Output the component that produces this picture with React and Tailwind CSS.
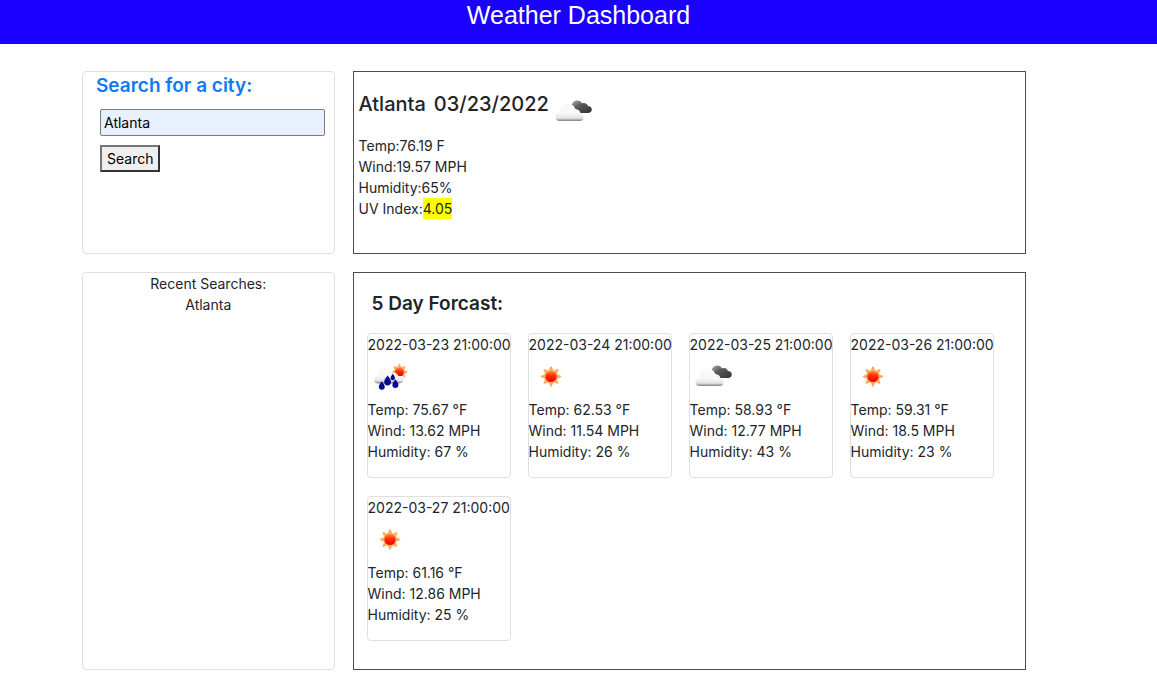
import { useState } from "react";

const days = [
  { date: "2022-03-23 21:00:00", icon: "rain", temp: "75.67", wind: "13.62", humidity: "67" },
  { date: "2022-03-24 21:00:00", icon: "sun", temp: "62.53", wind: "11.54", humidity: "26" },
  { date: "2022-03-25 21:00:00", icon: "clouds", temp: "58.93", wind: "12.77", humidity: "43" },
  { date: "2022-03-26 21:00:00", icon: "sun", temp: "59.31", wind: "18.5", humidity: "23" },
  { date: "2022-03-27 21:00:00", icon: "sun", temp: "61.16", wind: "12.86", humidity: "25" },
];

const rays = [0, 45, 90, 135, 180, 225, 270, 315];

function SunShape() {
  return (
    <g>
      {rays.map((angle) => (
        <path key={angle} d="M-2.3 -6 L-0.5 -10.2 L0.5 -10.2 L2.3 -6 Z" fill="#f9ae5c" transform={`rotate(${angle})`} />
      ))}
      <circle r="6.8" fill="#fbb058" />
      <circle r="5.6" fill="url(#sun-core)" />
    </g>
  );
}

function Gradients() {
  return (
    <svg className="absolute size-0" aria-hidden="true">
      <defs>
        <linearGradient id="sun-core" x1="0" y1="0" x2="0" y2="1">
          <stop offset="0" stopColor="#ff8a3c" />
          <stop offset="0.45" stopColor="#ff2a0c" />
          <stop offset="1" stopColor="#f50000" />
        </linearGradient>
        <linearGradient id="cloud-light" x1="0" y1="0" x2="0" y2="1">
          <stop offset="0" stopColor="#fafafa" />
          <stop offset="0.6" stopColor="#f6f6f6" />
          <stop offset="0.84" stopColor="#e2e2e2" />
          <stop offset="1" stopColor="#808080" />
        </linearGradient>
        <linearGradient id="cloud-dark" x1="0" y1="0" x2="1" y2="1">
          <stop offset="0" stopColor="#b0b0b0" />
          <stop offset="0.4" stopColor="#5a5a5a" />
          <stop offset="1" stopColor="#303030" />
        </linearGradient>
      </defs>
    </svg>
  );
}

function WeatherIcon({ name }) {
  if (name === "sun") {
    return (
      <svg viewBox="0 0 44 44" className="size-11" role="img" aria-label="Clear">
        <g transform="translate(22 21.5)">
          <SunShape />
        </g>
      </svg>
    );
  }
  if (name === "clouds") {
    return (
      <svg viewBox="0 0 44 44" className="size-11" role="img" aria-label="Cloudy">
        <path
          d="M21.5 16.5 C21.5 13 24 10.4 27.2 10.4 C29.6 10.4 31.2 11.6 32 13.4 C34.6 12.4 37.2 13.6 37.9 16 C40.4 16.2 41.8 17.6 41.8 19.6 C41.8 21.8 40.2 23 38 23 L31.5 23 C29 23 27.8 21.4 26.6 19.4 Z"
          fill="url(#cloud-dark)"
        />
        <path
          d="M9.5 31 C7 31 5.4 29.2 5.4 26.8 C5.4 24.2 7 22.6 9.6 22.4 C9.6 17 12.6 13.6 17.4 13.6 C21.6 13.6 24.4 16 25.4 19.6 C28.2 19 30 20.4 30.2 23 C32.4 23.4 33.6 25 33.6 27 C33.6 29.4 32.2 31 30 31 Z"
          fill="url(#cloud-light)"
        />
      </svg>
    );
  }
  return (
    <svg viewBox="0 0 44 44" className="size-11" role="img" aria-label="Rain">
      <g transform="translate(31.4 17) scale(0.8)">
        <SunShape />
      </g>
      <path
        d="M9.5 28.4 C7.3 28.4 6 27 6 24.8 C6 22.4 7.4 21 10 20.8 C9.8 15.6 13 12.2 17.4 12.2 C21.4 12.2 24 14.6 24.8 18 C27.4 17.2 29.4 18.4 30 20.8 C31.6 21.2 34 20.8 36 21.2 C36.6 25.4 34.4 28.4 30.4 28.4 Z"
        fill="url(#cloud-light)"
      />
      <g fill="#0a0a91">
        <path d="M13.8 26.4 C15.4 28.2 16.8 30 16.8 31.8 A3 3 0 0 1 10.8 31.8 C10.8 30 12.2 28.2 13.8 26.4 Z" />
        <path d="M19.6 20.6 C21.4 23 23 24.8 23 27 A3.4 3.4 0 0 1 16.2 27 C16.2 24.8 17.8 23 19.6 20.6 Z" />
        <path d="M24.8 18.8 C26 20.4 27 21.6 27 23 A2.2 2.2 0 0 1 22.6 23 C22.6 21.6 23.6 20.4 24.8 18.8 Z" />
        <path d="M27.4 24.6 C29 26.4 30.4 28.2 30.4 30 A3 3 0 0 1 24.4 30 C24.4 28.2 25.8 26.4 27.4 24.6 Z" />
      </g>
    </svg>
  );
}

function DayCard({ day }) {
  return (
    <li className="w-36 rounded border border-[#dfdfdf] pb-[15px] whitespace-nowrap">
      <p>{day.date}</p>
      <WeatherIcon name={day.icon} />
      <p>Temp: {day.temp} °F</p>
      <p>Wind: {day.wind} MPH</p>
      <p>Humidity: {day.humidity} %</p>
    </li>
  );
}

export default function App() {
  const [city, setCity] = useState("Atlanta");

  return (
    <div className="min-h-screen bg-white font-[Inter,sans-serif] text-sm leading-[21px] text-[#212529]">
      <Gradients />
      <header className="h-11 bg-[#1a00ff] text-center font-['Liberation_Sans',Arial,sans-serif] text-white">
        <h1 className="text-[25px] leading-[30px]">Weather Dashboard</h1>
      </header>

      <main className="grid grid-cols-[3fr_8fr] gap-[18px] pt-[27px] pr-[131px] pb-2 pl-[82px]">
        <section className="min-h-[183px] rounded border border-[#dfdfdf]">
          <form className="pr-[9px] pl-[17px]" onSubmit={(e) => e.preventDefault()}>
            <label htmlFor="city" className="-ml-1 block text-[19px] leading-7 font-semibold text-[#0d7bf2]">
              Search for a city:
            </label>
            <input
              id="city"
              type="text"
              value={city}
              onChange={(e) => setCity(e.target.value)}
              className="mt-[9px] block h-[27px] w-full rounded-xs border border-[#767b85] bg-[#e8f0fe] px-[3px] text-black"
            />
            <button
              type="submit"
              className="mt-[9px] block h-[27px] border-2 border-t-[#767676] border-r-[#333333] border-b-[#333333] border-l-[#767676] bg-[#efefef] px-[5px] leading-none text-black"
            >
              Search
            </button>
          </form>
        </section>

        <section className="min-h-[182px] border border-[#4a4d50] px-[5px] pt-[18px]">
          <div className="mb-px flex items-start gap-px">
            <h2 className="flex gap-2 text-xl leading-7 font-medium">
              <span>Atlanta</span>
              <span>03/23/2022</span>
            </h2>
            <WeatherIcon name="clouds" />
          </div>
          <p>Temp:76.19 F</p>
          <p>Wind:19.57 MPH</p>
          <p>Humidity:65%</p>
          <p>
            UV Index:<span className="inline-block bg-[#ffff00]">4.05</span>
          </p>
        </section>

        <section className="min-h-[398px] rounded border border-[#dfdfdf] text-center">
          <h2>Recent Searches:</h2>
          <p>Atlanta</p>
        </section>

        <section className="min-h-[397px] border border-[#4a4d50] px-[13px] pt-[17px] pb-[27px]">
          <h2 className="pl-[5px] text-[19px] leading-7 font-semibold">5 Day Forcast:</h2>
          <ul className="mt-[15px] flex flex-wrap gap-x-[17px] gap-y-[18px]">
            {days.map((day) => (
              <DayCard key={day.date} day={day} />
            ))}
          </ul>
        </section>
      </main>
    </div>
  );
}
